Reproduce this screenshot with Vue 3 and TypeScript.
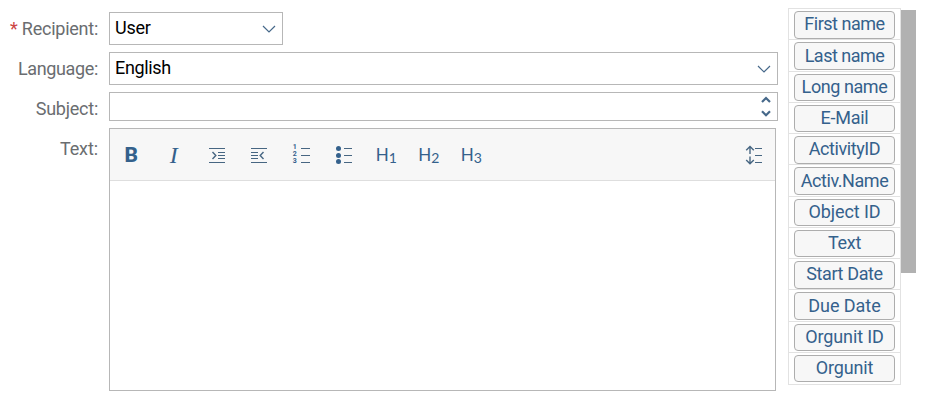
<script setup lang="ts">
interface Placeholder {
  label: string
  spacing: number
}

const placeholders: Placeholder[] = [
  { label: 'First name', spacing: -0.48 },
  { label: 'Last name', spacing: -0.5 },
  { label: 'Long name', spacing: -0.42 },
  { label: 'E-Mail', spacing: -0.25 },
  { label: 'ActivityID', spacing: -0.42 },
  { label: 'Activ.Name', spacing: -0.42 },
  { label: 'Object ID', spacing: -0.08 },
  { label: 'Text', spacing: -0.25 },
  { label: 'Start Date', spacing: -0.37 },
  { label: 'Due Date', spacing: -0.05 },
  { label: 'Orgunit ID', spacing: -0.12 },
  { label: 'Orgunit', spacing: -0.18 },
]

const headings: number[] = [1, 2, 3]
</script>

<template>
  <main class="page">
    <form class="form" @submit.prevent>
      <div class="row recipient">
        <label class="label"><span class="required">*</span> Recipient:</label>
        <div class="field select short">
          <span>User</span>
          <svg class="chevron" width="14" height="10" viewBox="0 0 14 10"><path d="M1 2 7 8l6-6" /></svg>
        </div>
      </div>
      <div class="row language">
        <label class="label">Language:</label>
        <div class="field select">
          <span>English</span>
          <svg class="chevron" width="14" height="10" viewBox="0 0 14 10"><path d="M1 2 7 8l6-6" /></svg>
        </div>
      </div>
      <div class="row subject">
        <label class="label">Subject:</label>
        <div class="field stepper">
          <svg class="arrows" width="10" height="22" viewBox="0 0 10 22"><path d="M1 6 5 2l4 4M1 15.200l4 4 4-4" /></svg>
        </div>
      </div>
      <div class="row text">
        <label class="label">Text:</label>
        <div class="editor">
          <div class="toolbar">
            <button type="button" class="tool bold">B</button>
            <button type="button" class="tool italic">I</button>
            <button type="button" class="tool indent">
              <svg width="18" height="20" viewBox="0 0 18 20"><path d="M1 3.500h16M1 17.500h16M10 7.500h7M10 10.500h7M10 13.500h7" /><path class="strong" d="m4.500 7 3.300 3.500L4.500 14" /></svg>
            </button>
            <button type="button" class="tool indent">
              <svg width="18" height="20" viewBox="0 0 18 20"><path d="M1 3.500h16M1 17.500h16M1 7.500h7M1 10.500h7M1 13.500h7" /><path class="strong" d="M13.500 7l-3.300 3.500 3.300 3.500" /></svg>
            </button>
            <button type="button" class="tool">
              <span class="numbers"><i>1</i><i>2</i><i>3</i></span>
              <svg width="9" height="20" viewBox="0 0 9 20"><path d="M0 3.500h9M0 10.500h9M0 17.500h9" /></svg>
            </button>
            <button type="button" class="tool">
              <svg width="18" height="20" viewBox="0 0 18 20"><g class="dots"><circle cx="3.500" cy="3.500" r="2.500" /><circle cx="3.500" cy="10.500" r="2.500" /><circle cx="3.500" cy="16.500" r="2.500" /></g><path d="M9 3.500h8M9 10.500h8M9 17.500h8" /></svg>
            </button>
            <button v-for="n in headings" :key="n" type="button" class="tool heading">H<span class="level">{{ n }}</span></button>
            <button type="button" class="tool spacing">
              <svg width="18" height="20" viewBox="0 0 18 20"><path d="M10 3.500h7M10 10.500h7M10 17.500h7" /><path class="strong" d="M5 1.500v7.500M1.200 5.300 5 1.500l3.800 3.800M5 11.500v7.300M1.200 15 5 18.800 8.800 15" /></svg>
            </button>
          </div>
        </div>
      </div>
    </form>
    <aside class="placeholders">
      <div v-for="p in placeholders" :key="p.label" class="cell">
        <button type="button" class="insert" :style="{ letterSpacing: p.spacing + 'px' }">{{ p.label }}</button>
      </div>
    </aside>
    <div class="scrollbar"></div>
  </main>
</template>

<style>
body {
  background: #fff;
}
</style>

<style scoped>
.page {
  display: flex;
  align-items: flex-start;
  box-sizing: border-box;
  width: 934px;
  height: 408px;
  overflow: hidden;
  font-family: Roboto, "Liberation Sans", sans-serif;
  font-size: 18px;
  letter-spacing: -0.25px;
  color: #000;
}
.form {
  display: flex;
  flex-direction: column;
  gap: 7px;
  width: 778px;
  padding-top: 12px;
}
.row {
  display: flex;
  gap: 11px;
}
.language {
  letter-spacing: -0.35px;
}
.label {
  width: 98px;
  line-height: 33px;
  text-align: right;
  color: #6a6d70;
  white-space: nowrap;
}
.required {
  color: #cc4444;
}
.field {
  display: flex;
  align-items: center;
  justify-content: space-between;
  box-sizing: border-box;
  flex: 1;
  height: 33px;
  padding: 0 6px 0 5px;
  border: 1px solid #b7b7b7;
}
.field span {
  line-height: 28px;
  padding-bottom: 2px;
}
.short {
  flex: 0 0 174px;
}
.chevron,
.arrows {
  fill: none;
  stroke: #46688a;
  stroke-width: 1.2;
}
.arrows {
  stroke-width: 2.2;
}
.subject {
  height: 29px;
}
.stepper {
  height: 29px;
  justify-content: flex-end;
}
.text .label {
  line-height: 41px;
  letter-spacing: -0.1px;
}
.editor {
  box-sizing: border-box;
  width: 667px;
  height: 263px;
  border: 1px solid #b7b7b7;
}
.toolbar {
  display: flex;
  align-items: center;
  box-sizing: border-box;
  height: 52px;
  background: #f7f7f7;
  border-bottom: 1px solid #dedede;
}
.tool {
  display: flex;
  align-items: center;
  justify-content: center;
  flex: 0 0 42.5px;
  height: 36px;
  padding: 0;
  border: 0;
  background: none;
  color: #34618c;
  font: 17px Roboto, sans-serif;
}
.tool svg {
  fill: none;
  stroke: #476682;
  stroke-width: 1.1;
}
.indent svg {
  margin-left: 1px;
}
.tool .strong {
  stroke-width: 1.4;
}
.tool .dots {
  fill: #34618c;
  stroke: none;
}
.bold {
  padding-top: 1px;
  font-size: 21px;
  font-weight: 800;
}
.italic {
  padding-top: 1px;
  font: italic 24px "Liberation Serif", serif;
}
.numbers {
  display: flex;
  flex-direction: column;
  width: 5px;
  margin-right: 4px;
}
.numbers i {
  font: bold 7px/7px Roboto, sans-serif;
}
.level {
  font: 14px Lato, sans-serif;
  padding-top: 6px;
}
.heading {
  font-family: Lato, sans-serif;
}
.spacing {
  margin-left: auto;
}
.placeholders {
  box-sizing: border-box;
  width: 113px;
  margin: 8px 0 0 10px;
  border: 1px solid #e2e2e2;
}
.cell {
  box-sizing: border-box;
  height: 31.250px;
  padding: 2px 5px 0;
  border-bottom: 1px solid #e2e2e2;
}
.cell:last-child {
  border-bottom: 0;
}
.insert {
  display: block;
  box-sizing: border-box;
  width: 101px;
  height: 27.500px;
  padding: 0 0 2px;
  border: 1px solid #adadad;
  border-radius: 4px;
  background: #f7f7f7;
  color: #34618c;
  font: 18px/23px Roboto, sans-serif;
  white-space: nowrap;
}
.scrollbar {
  width: 15px;
  height: 263px;
  margin-top: 10px;
  background: #b1b1b1;
}
</style>
